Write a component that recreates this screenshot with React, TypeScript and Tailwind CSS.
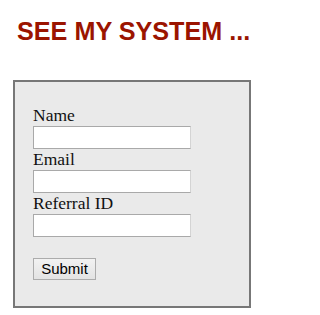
import React from 'react';

const fields = ['Name', 'Email', 'Referral ID'];

const App: React.FC = () => {
  return (
    <div className="min-h-screen bg-white pt-[17px]">
      <h2
        className="pl-[17px] text-[25.2px] font-bold leading-[29px] text-[#9b1400]"
        style={{ fontFamily: '"Liberation Sans", Arial, sans-serif' }}
      >
        SEE MY SYSTEM ...
      </h2>

      {/* Form box */}
      <form
        className="mt-[34px] ml-[13px] w-[238px] border-2 border-[#777777] bg-[#eaeaea] pt-[22.5px] pb-[26px] pl-[18px]"
        onSubmit={(e) => e.preventDefault()}
      >
        {fields.map((label) => (
          <div key={label}>
            <div
              className="h-[21.5px] text-[17.5px] leading-[19px] pt-[1px] text-[#111111]"
              style={{ fontFamily: '"Liberation Serif", "Times New Roman", serif' }}
            >
              {label}
            </div>
            <input
              type="text"
              className="block h-[22.5px] w-[158px] border border-[#a9a9a9] border-r-[#d4d4d4] bg-white outline-none"
            />
          </div>
        ))}

        <button
          type="submit"
          className="mt-[21px] h-[22px] w-[63px] border border-[#acacac] bg-gradient-to-b from-[#f2f2f2] to-[#e3e3e3] text-[15px] leading-[20px] text-black"
          style={{ fontFamily: '"Liberation Sans", Arial, sans-serif' }}
        >
          Submit
        </button>
      </form>
    </div>
  );
};

export default App;
